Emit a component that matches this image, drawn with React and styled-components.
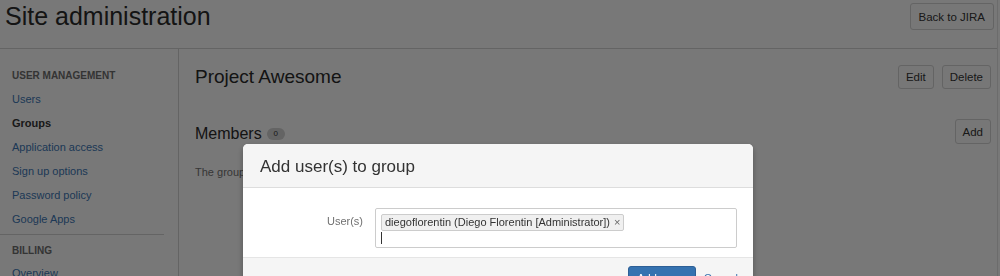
import React from "react";
import styled, { createGlobalStyle } from "styled-components";

const GlobalStyle = createGlobalStyle`
  html, body {
    margin: 0;
    padding: 0;
    background: #f5f5f5;
    font-family: "Liberation Sans", Arial, sans-serif;
    color: #333;
    overflow: hidden;
  }
`;

const Page = styled.div`
  width: 998px;
  height: 276px;
  border-right: 1px solid #ddd;
  box-sizing: border-box;
`;

const Header = styled.header`
  display: flex;
  justify-content: space-between;
  align-items: flex-start;
  height: 47px;
  padding: 1px 3px 0 5px;
  border-bottom: 1px solid #ccc;
`;

const SiteTitle = styled.h1`
  margin: 0;
  font-size: 25px;
  line-height: 30px;
  font-weight: normal;
  color: #2a2a2a;
`;

const Button = styled.button`
  font-family: inherit;
  font-size: 11.5px;
  color: #333;
  background: #f2f2f2;
  border: 1px solid #ccc;
  border-radius: 3px;
  height: ${(p) => p.$h || 24}px;
  padding: 0 ${(p) => p.$px || 7}px;
  margin-top: ${(p) => p.$mt || 0}px;
`;

const Body = styled.div`
  display: grid;
  grid-template-columns: 179px 1fr;
  height: 228px;
`;

const Sidebar = styled.nav`
  border-right: 1px solid #ccc;
  padding-top: 20px;
`;

const NavHeading = styled.div`
  font-size: 10px;
  font-weight: bold;
  text-transform: uppercase;
  color: #6a6a6a;
  padding-left: 12px;
  line-height: 14px;
  margin-bottom: ${(p) => p.$mb || 4}px;
`;

const NavItem = styled.a`
  display: block;
  padding-left: 12px;
  font-size: 11px;
  line-height: 24px;
  color: ${(p) => (p.$active ? "#333" : "#3b73af")};
  font-weight: ${(p) => (p.$active ? "bold" : "normal")};
  text-decoration: none;
`;

const NavDivider = styled.hr`
  border: 0;
  border-top: 1px solid #ccc;
  margin: 3px 14px 9px 0;
`;

const Main = styled.main`
  padding: 15px 6px 0 16px;
`;

const TitleRow = styled.div`
  display: flex;
  justify-content: space-between;
  align-items: flex-start;
  height: ${(p) => p.$h || "auto"};
`;

const GroupTitle = styled.h2`
  margin: 0;
  font-size: 19px;
  line-height: 26px;
  font-weight: normal;
  color: #2a2a2a;
`;

const Actions = styled.div`
  display: flex;
  gap: 8px;
  padding-top: 1px;
`;

const MembersTitle = styled.h3`
  display: flex;
  align-items: center;
  gap: 5px;
  margin: 0;
  padding-top: 3px;
  font-size: 16px;
  line-height: 24px;
  font-weight: normal;
  color: #2a2a2a;
`;

const Badge = styled.span`
  display: inline-block;
  min-width: 18px;
  height: 12px;
  line-height: 12px;
  border-radius: 6px;
  background: #ccc;
  color: #333;
  font-size: 8px;
  text-align: center;
`;

const Muted = styled.p`
  margin: 20px 0 0;
  font-size: 11px;
  color: #707070;
`;

const Blanket = styled.div`
  position: fixed;
  inset: 0;
  background: rgba(0, 0, 0, 0.51);
`;

const Dialog = styled.section`
  position: fixed;
  top: 144px;
  left: 243px;
  width: 510px;
  background: #fff;
  border-radius: 5px;
  overflow: hidden;
  box-shadow: 0 3px 6px rgba(0, 0, 0, 0.3);
`;

const DialogHeader = styled.div`
  height: 44px;
  box-sizing: border-box;
  background: #f5f5f5;
  border-bottom: 1px solid #ddd;
  padding: 13px 0 0 17px;
`;

const DialogTitle = styled.h2`
  margin: 0;
  font-size: 17px;
  line-height: 20px;
  font-weight: normal;
  color: #333;
`;

const DialogBody = styled.div`
  display: grid;
  grid-template-columns: 120px 1fr;
  column-gap: 12px;
  padding: 20px 16px 9px 0;
  border-bottom: 1px solid #e5e5e5;
`;

const FieldLabel = styled.label`
  text-align: right;
  font-size: 11px;
  color: #707070;
  padding-top: 7px;
`;

const MultiInput = styled.div`
  height: 40px;
  border: 1px solid #ccc;
  border-radius: 2px;
  box-sizing: border-box;
  padding: 3px 4px 0 5px;
`;

const Tag = styled.span`
  display: inline-flex;
  align-items: center;
  gap: 4px;
  height: 15px;
  padding: 0 3px;
  background: #f0f0f0;
  border: 1px solid #ccc;
  border-radius: 2px;
  font-size: 11px;
  color: #333;
`;

const Remove = styled.span`
  font-size: 11px;
  color: #666;
`;

const Caret = styled.div`
  width: 1px;
  height: 12px;
  background: #333;
  margin-top: 1px;
`;

const DialogFooter = styled.div`
  display: flex;
  justify-content: flex-end;
  align-items: flex-start;
  gap: 8px;
  background: #f5f5f5;
  padding: 8px 15px 8px 0;
  height: 30px;
`;

const Primary = styled.button`
  font-family: inherit;
  font-size: 11px;
  color: #fff;
  background: #3572b0;
  border: 1px solid #2d5f96;
  border-radius: 3px;
  height: 24px;
  padding: 0 8px;
`;

const LinkButton = styled.a`
  font-size: 11px;
  line-height: 24px;
  color: #3b73af;
  text-decoration: none;
`;

export default function App() {
  return (
    <>
      <GlobalStyle />
      <Page>
        <Header>
          <SiteTitle>Site administration</SiteTitle>
          <Button $h={27} $px={8} $mt={2}>
            Back to JIRA
          </Button>
        </Header>
        <Body>
          <Sidebar>
            <NavHeading>User management</NavHeading>
            <NavItem>Users</NavItem>
            <NavItem $active>Groups</NavItem>
            <NavItem>Application access</NavItem>
            <NavItem>Sign up options</NavItem>
            <NavItem>Password policy</NavItem>
            <NavItem>Google Apps</NavItem>
            <NavDivider />
            <NavHeading $mb={3}>Billing</NavHeading>
            <NavItem>Overview</NavItem>
          </Sidebar>
          <Main>
            <TitleRow $h="55px">
              <GroupTitle>Project Awesome</GroupTitle>
              <Actions>
                <Button>Edit</Button>
                <Button>Delete</Button>
              </Actions>
            </TitleRow>
            <TitleRow>
              <MembersTitle>
                Members <Badge>0</Badge>
              </MembersTitle>
              <Button $h={25}>Add</Button>
            </TitleRow>
            <Muted>The group has no members.</Muted>
          </Main>
        </Body>
      </Page>
      <Blanket />
      <Dialog>
        <DialogHeader>
          <DialogTitle>Add user(s) to group</DialogTitle>
        </DialogHeader>
        <DialogBody>
          <FieldLabel>User(s)</FieldLabel>
          <MultiInput>
            <Tag>
              diegoflorentin (Diego Florentin [Administrator])
              <Remove>×</Remove>
            </Tag>
            <Caret />
          </MultiInput>
        </DialogBody>
        <DialogFooter>
          <Primary>Add users</Primary>
          <LinkButton>Cancel</LinkButton>
        </DialogFooter>
      </Dialog>
    </>
  );
}
